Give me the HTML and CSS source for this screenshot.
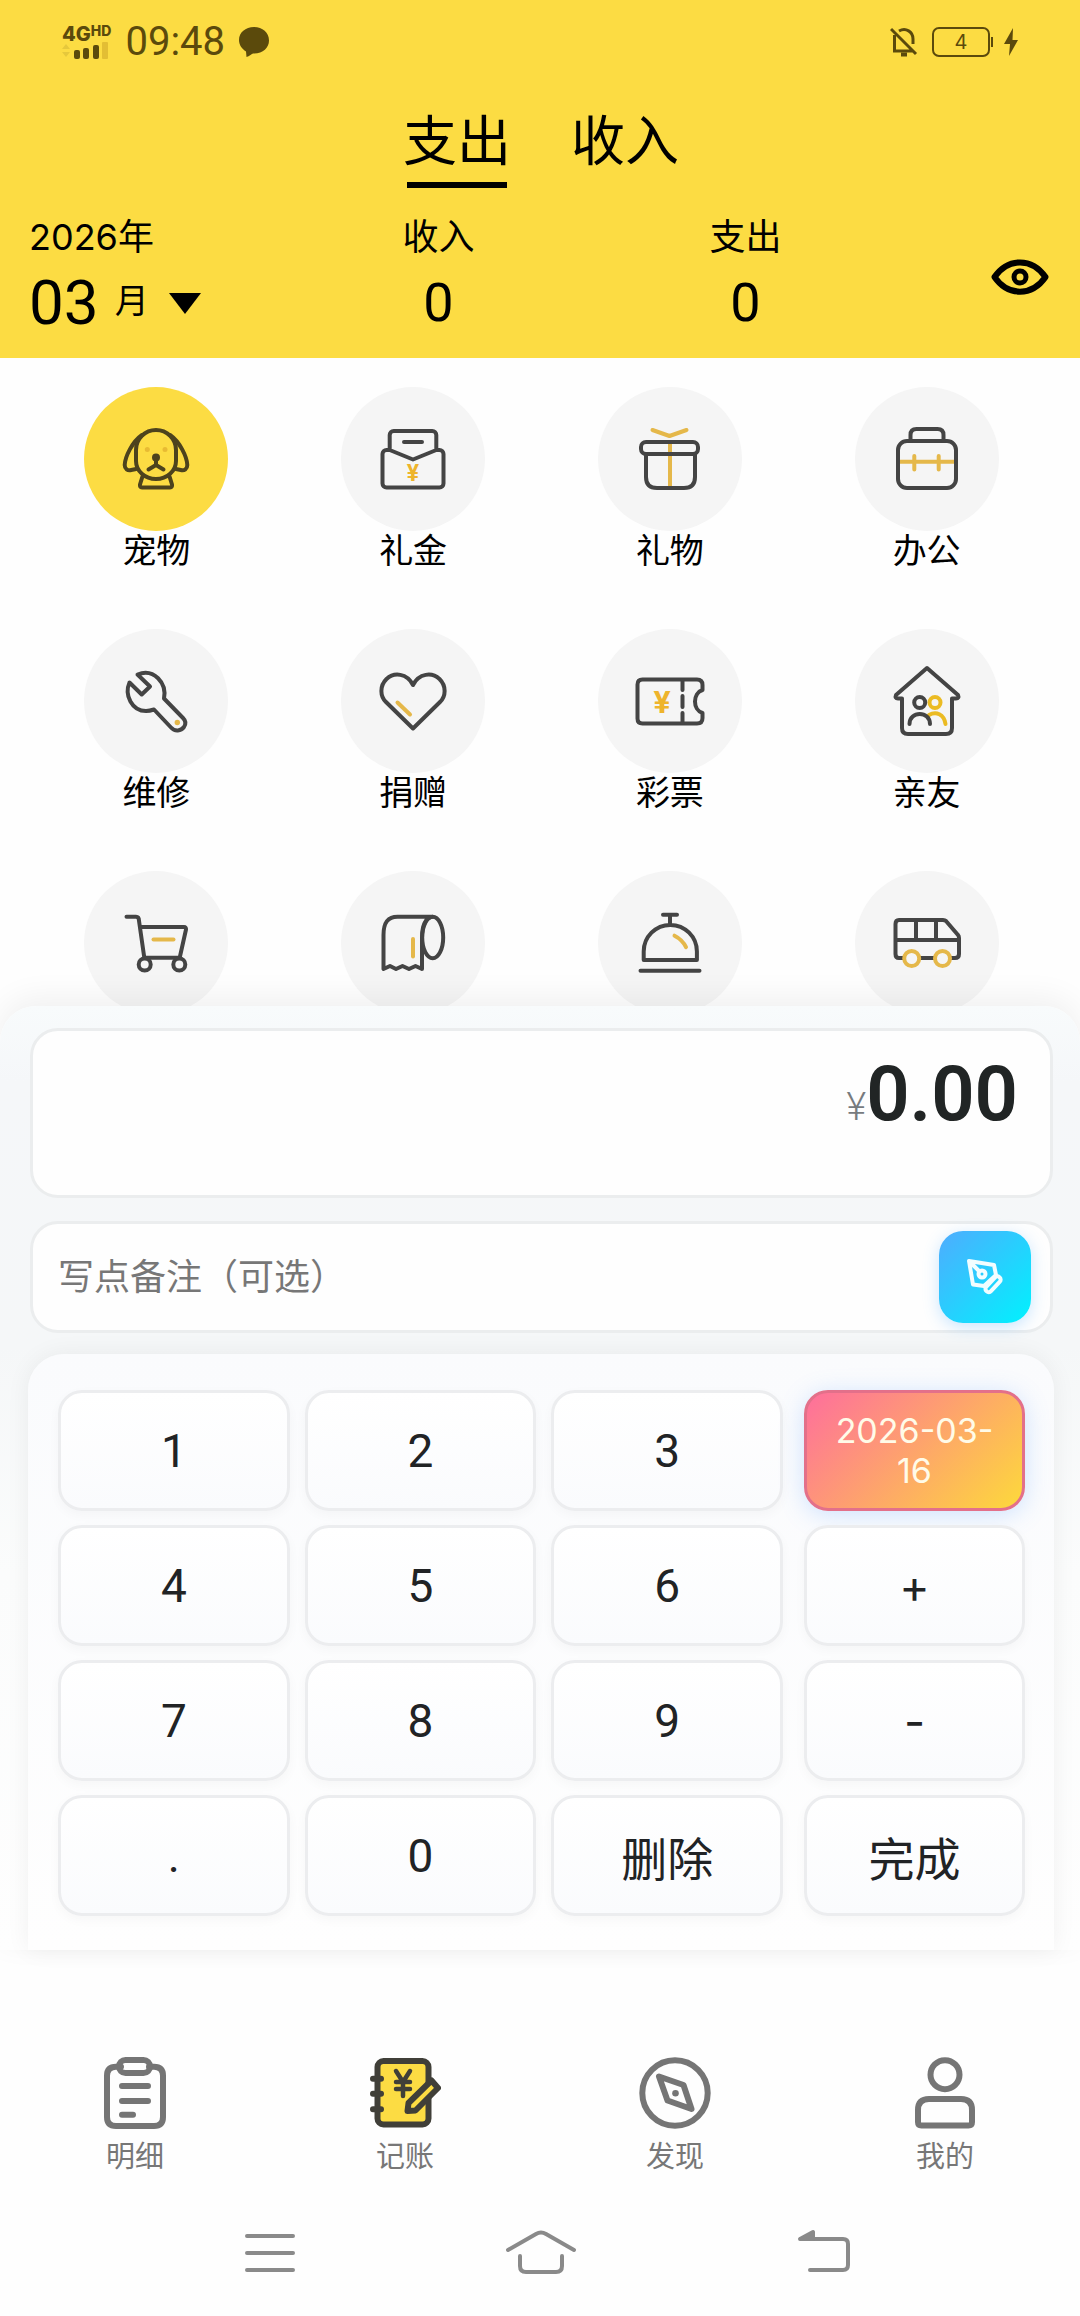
FILE: index.html
```html
<!DOCTYPE html>
<html lang="zh-CN">
<head>
  <meta charset="UTF-8">
  <meta name="viewport" content="width=device-width, initial-scale=1.0">
  <title>记账</title>
  <link rel="stylesheet" href="styles.css">
</head>
<body>
  <div class="app">
    <header class="header">
      <div class="status">
        <div class="status-side">
          <div class="signal">
            <span class="network">4G<sup>HD</sup></span>
            <svg width="46" height="17" viewBox="0 0 46 17">
              <path d="M0 7l4-5 4 5zM0 10l4 5 4-5z" fill="#e6c83c"/>
              <rect x="12" y="8" width="6" height="9" rx="2"/>
              <rect x="21" y="6" width="6" height="11" rx="2"/>
              <rect x="31" y="3" width="6" height="14" rx="2"/>
              <rect x="40" y="0" width="6" height="17" rx="1" fill="#e3be34"/>
            </svg>
          </div>
          <span class="time">09:48</span>
          <svg width="30" height="30" viewBox="0 0 30 30"><path d="M15 0C6.500 0 0 5.500 0 13c0 5 3 9 7 11.500L7.500 30c3-.5 4.500-3 6.500-3.500C23.500 27 30 21 30 13.500 30 5.500 23.500 0 15 0z"/></svg>
        </div>
        <div class="status-side status-right">
          <svg width="28" height="30" viewBox="0 0 28 30" fill="none" stroke="#5b4a0c" stroke-width="3">
            <path d="M1 2l25 25M4.500 8V24H23M9 4c7-4 14 1 14 8v5"/>
            <path d="M11 27.500h6" stroke-width="4"/>
          </svg>
          <span class="battery">4</span>
          <svg width="14" height="28" viewBox="0 0 14 28"><path d="M9 0L0 16h6l-1 12L14 12H8.500z"/></svg>
        </div>
      </div>

      <nav class="type-tabs">
        <button class="type-tab active">支出</button>
        <button class="type-tab">收入</button>
      </nav>

      <div class="summary">
        <div class="month">
          <span class="caption">2026年</span>
          <button class="month-pick"><span class="month-num">03</span><span class="month-unit">月</span><i class="caret"></i></button>
        </div>
        <div class="total">
          <span class="caption">收入</span>
          <span class="total-num">0</span>
        </div>
        <div class="total">
          <span class="caption">支出</span>
          <span class="total-num">0</span>
        </div>
        <button class="eye" aria-label="隐藏金额">
          <svg width="58" height="36" viewBox="0 0 58 36" fill="none" stroke="#000" stroke-width="6" stroke-linejoin="round">
            <path d="M3.500 18C17-1.500 41-1.500 54.500 18 41 37.500 17 37.500 3.500 18z"/>
            <circle cx="29" cy="18" r="6" stroke-width="5"/>
          </svg>
        </button>
      </div>
    </header>

    <main class="categories">
      <button class="cat active">
        <span class="cat-icon"><svg viewBox="0 0 72 72">
          <path d="M16 27a20 20 0 0 1 40 0v11a20 18 0 0 1-40 0z"/>
          <path d="M22 12C12 19 5 34 4.700 42c0 4 3 6 6.500 5l5-1M50 12c10 7 17 22 17.300 30 0 4-3 6-6.500 5l-5-1"/>
          <path d="M22.300 54L20 61.500q-.5 3 2 3h28q2.500 0 2-3L49.700 54M36 35v7l-7.500 4.500M36 42l7.500 4.500"/>
          <circle cx="36" cy="34.500" r="2"/>
          <g fill="#e8bb33" stroke="none"><circle cx="27.300" cy="26.500" r="2.500"/><circle cx="45" cy="26.500" r="2.500"/></g>
        </svg></span>
        宠物
      </button>
      <button class="cat">
        <span class="cat-icon"><svg viewBox="0 0 72 72">
          <path d="M12.700 27H9.500a4 4 0 0 0-4 4v29.500a4 4 0 0 0 4 4h53a4 4 0 0 0 4-4V31a4 4 0 0 0-4-4h-3.200L36 36.500 12.700 27V12a4 4 0 0 1 4-4h38.600a4 4 0 0 1 4 4v15M27 19h18"/>
          <text class="yen" x="36" y="58" font-size="23">¥</text>
        </svg></span>
        礼金
      </button>
      <button class="cat">
        <span class="cat-icon"><svg viewBox="0 0 72 72">
          <path class="accent" d="M18.500 7L35.500 13 52.500 7M36 19v45"/>
          <rect x="7" y="19" width="57" height="12" rx="5"/>
          <path d="M12 31v23q0 11 11 11h27q11 0 11-11V31"/>
        </svg></span>
        礼物
      </button>
      <button class="cat">
        <span class="cat-icon"><svg viewBox="0 0 72 72">
          <path class="accent" d="M9 38.700h54M23.300 33v13.500M47.700 33v13.500"/>
          <rect x="7" y="18" width="58" height="47" rx="9"/>
          <path d="M19.500 18v-6q0-6 6-6h21q6 0 6 6v6"/>
        </svg></span>
        办公
      </button>

      <button class="cat">
        <span class="cat-icon"><svg viewBox="0 0 72 72">
          <path d="M17.500 9.500L30 21.500 21.700 29.500 9.500 17.500C4 30 12 46 26 46c3 0 5-.5 8-1.500l17 18c4 4.500 10 3.500 13-.5 2-3 2-6-1-9L44 33.500C47 18 34 3 17.500 9.500z"/>
          <circle cx="57.300" cy="57.500" r="2.700" fill="#e5b84a" stroke="none"/>
        </svg></span>
        维修
      </button>
      <button class="cat">
        <span class="cat-icon"><svg viewBox="0 0 72 72">
          <path d="M36 20C30 8 17 7 9.500 14 2.500 21 3 31 9 37l27 26.500L63 37c6-6 6.500-16-.5-23C55 7 42 8 36 20z"/>
          <path class="accent" d="M20.500 37.500l12.500 12"/>
        </svg></span>
        捐赠
      </button>
      <button class="cat">
        <span class="cat-icon"><svg viewBox="0 0 72 72">
          <path d="M8.500 14.500H63q5.500 0 5.500 5.500v5c-10 3-10 20 0 23v5q0 5.500-5.500 5.500H8.500q-5 0-5-5v-34q0-5 5-5z"/>
          <path d="M48.500 15v10M48.500 31v11M48.500 48v10"/>
          <text class="yen" x="28" y="48" font-size="32">¥</text>
        </svg></span>
        彩票
      </button>
      <button class="cat">
        <span class="cat-icon"><svg viewBox="0 0 72 72">
          <path d="M36 3L5 30q-1.500 3.500 2 3.500h4V63q0 6 6 6h38q6 0 6-6V33.500h4q3.500 0 2-3.500z"/>
          <g stroke="#ebbb23"><circle cx="44" cy="37.500" r="5.500"/><path d="M38 50c7-4 15-1 16.500 9"/></g>
          <circle cx="28.700" cy="37.500" r="5.500"/><path d="M18.500 59c0-13.500 20.500-13.500 20.500 0"/>
        </svg></span>
        亲友
      </button>

      <button class="cat" aria-label="购物">
        <span class="cat-icon"><svg viewBox="0 0 72 72">
          <path d="M6.500 9.700H16q3 0 3 4l5.300 37h35.400L66 22.500q.3-2.500-2-2.500H20"/>
          <circle cx="24.700" cy="57.500" r="6"/><circle cx="59.300" cy="57.500" r="6"/>
          <path class="accent" d="M33.500 32.500h20"/>
        </svg></span>
      </button>
      <button class="cat" aria-label="日用">
        <span class="cat-icon"><svg viewBox="0 0 72 72">
          <path d="M6.500 62V28c0-12 4-18.300 14-18.300h35C48 10 45 20 45 31v31l-6.500-3-6.500 3-6.500-3-6.500 3-6-3z"/>
          <ellipse cx="55.700" cy="30.500" rx="10.500" ry="20.800"/>
          <path class="accent" d="M36 32v17.500"/>
        </svg></span>
      </button>
      <button class="cat" aria-label="餐饮">
        <span class="cat-icon"><svg viewBox="0 0 72 72">
          <path d="M29 7.700h14M36 8v9M9.700 53V44.500a26.600 26.600 0 0 1 53.200 0V53zM6.500 63.700h59"/>
          <path class="accent" d="M40.500 28.700q8 4 11.500 11.500"/>
        </svg></span>
      </button>
      <button class="cat" aria-label="交通">
        <span class="cat-icon"><svg viewBox="0 0 72 72">
          <path d="M8 13h44q2 0 3 1l12 14q1 1 1 3v16q0 4-4 4H8q-3.500 0-3.500-4V17q0-4 3.500-4zM5 33h62M25 14v19M45 14v19"/>
          <g stroke="#e5b84a" fill="#f5f5f5"><circle cx="20.700" cy="51.500" r="7.500"/><circle cx="51.500" cy="51.500" r="7.500"/></g>
        </svg></span>
      </button>
    </main>

    <section class="panel">
      <div class="card amount">
        <span class="currency">¥</span><span class="amount-num">0.00</span>
      </div>

      <div class="card note">
        <input class="note-input" type="text" placeholder="写点备注（可选）" aria-label="备注">
        <button class="note-btn" aria-label="编辑备注">
          <svg width="40" height="40" viewBox="0 0 40 40">
            <path d="M4 4l25 4 2 10-12 11-11-1.500zM5 5l9 9"/>
            <circle cx="17" cy="17" r="3.500"/>
            <rect x="18.500" y="24" width="19" height="6.500" rx="3" transform="rotate(-47 28 27.200)"/>
          </svg>
        </button>
      </div>

      <div class="keypad">
        <div class="keys keys-num">
          <button class="key">1</button>
          <button class="key">2</button>
          <button class="key">3</button>
          <button class="key">4</button>
          <button class="key">5</button>
          <button class="key">6</button>
          <button class="key">7</button>
          <button class="key">8</button>
          <button class="key">9</button>
          <button class="key">.</button>
          <button class="key">0</button>
          <button class="key">删除</button>
        </div>
        <div class="keys keys-op">
          <button class="key key-date">2026-03-16</button>
          <button class="key">+</button>
          <button class="key">-</button>
          <button class="key">完成</button>
        </div>
      </div>
    </section>

    <nav class="tabbar">
      <a class="tab" href="#">
        <svg viewBox="0 0 72 72">
          <path d="M22 9.700h-5q-9 0-9 9V60q0 9 9 9h38q9 0 9-9V18.700q0-9-9-9h-5"/>
          <rect x="20" y="3" width="31" height="13" rx="6.500"/>
          <path d="M23 29h26M23 44h26M23 57.700h11"/>
        </svg>
        明细
      </a>
      <a class="tab" href="#">
        <svg viewBox="0 0 72 72" class="book">
          <rect x="8.500" y="4" width="51" height="63.500" rx="6"/>
          <path d="M4 21.700h8M4 36.700h8M4 52.300h8"/>
          <path d="M27 14l7 11 7-11M34 25v14M27 25h14M27 32h14" stroke-width="4.500"/>
          <path d="M62.500 23.500L39.500 46 38.500 54l8-.5L69 31z"/>
        </svg>
        记账
      </a>
      <a class="tab" href="#">
        <svg viewBox="0 0 72 72">
          <circle cx="36" cy="36" r="32.700"/>
          <path d="M20 19.500L44.500 28 52.500 52 28.500 43.500z"/>
          <circle cx="36.500" cy="36.300" r="3.300" fill="#757575" stroke="none"/>
        </svg>
        发现
      </a>
      <a class="tab" href="#">
        <svg viewBox="0 0 72 72">
          <circle cx="36" cy="17.700" r="14.500"/>
          <path d="M20 42h32q11 0 11 11v12q0 3.500-3.500 3.500h-47Q9 68.500 9 65V53q0-11 11-11z"/>
        </svg>
        我的
      </a>
    </nav>

    <div class="sysnav">
      <button aria-label="最近任务"><svg width="76" height="50" viewBox="0 0 76 50"><path d="M15 8h46M15 25h46M15 42h46"/></svg></button>
      <button aria-label="主屏幕"><svg width="76" height="50" viewBox="0 0 76 50"><path d="M6 22L34 6q5-3 10 0l28 16M18 28v10q0 6 6 6h30q6 0 6-6V28"/></svg></button>
      <button aria-label="返回"><svg width="80" height="50" viewBox="0 0 80 50"><path d="M31 11h42q5 0 5 5v21q0 5-5 5H40"/><path d="M30 11l13-7v7z" fill="#8a8a8a"/></svg></button>
    </div>
  </div>
</body>
</html>
```

FILE: styles.css
```css
* {
  box-sizing: border-box;
}
body {
  margin: 0;
  background: #fefefe;
  color: #000;
  font-family: Inter, "Noto Sans CJK SC", sans-serif;
}
button {
  margin: 0;
  padding: 0;
  border: none;
  background: none;
  color: inherit;
  font-family: inherit;
  cursor: pointer;
}
svg {
  display: block;
}
.app {
  display: flex;
  flex-direction: column;
  min-height: 100vh;
}

/* header */
.header {
  background: #fcdc43;
  padding-bottom: 19px;
}
.status {
  display: flex;
  justify-content: space-between;
  align-items: center;
  height: 84px;
  padding: 0 62px;
  color: #5b4a0c;
  fill: #5b4a0c;
}
.status-side {
  display: flex;
  align-items: center;
  gap: 14px;
}
.signal {
  display: flex;
  flex-direction: column;
}
.network {
  font-size: 20px;
  line-height: 16px;
  font-weight: 800;
}
.network sup {
  font-size: 14px;
  line-height: 0;
  vertical-align: 5px;
}
.time {
  font-family: Roboto, sans-serif;
  font-size: 40px;
  line-height: 40px;
}
.battery {
  position: relative;
  width: 58px;
  height: 30px;
  border: 2px solid #5b4a0c;
  border-radius: 7px;
  font-size: 20px;
  line-height: 27px;
  text-align: center;
}
.battery::after {
  content: "";
  position: absolute;
  top: 8px;
  right: -5px;
  width: 2px;
  height: 10px;
  background: #5b4a0c;
}
.type-tabs {
  display: flex;
  justify-content: center;
  gap: 60px;
  padding: 21px 0 0 2px;
}
.type-tab {
  height: 83px;
  font-size: 54px;
  line-height: 74px;
}
.type-tab::after {
  content: "";
  display: block;
  width: 100px;
  height: 6px;
  margin: 3px auto 0;
}
.type-tab.active::after {
  background: #000;
}
.summary {
  display: grid;
  grid-template-columns: 256fr 307fr 307fr 150fr;
  padding: 26px 31px 0 29px;
}
.month,
.total {
  display: flex;
  flex-direction: column;
  gap: 7px;
}
.total {
  align-items: center;
}
.caption {
  font-size: 36px;
  line-height: 46px;
}
.month-pick {
  display: flex;
  align-items: center;
  height: 72px;
}
.month-num,
.total-num {
  font-family: Roboto, sans-serif;
  font-size: 62px;
  line-height: 72px;
}
.total-num {
  font-size: 54px;
}
.month-unit {
  margin: 0 20px 0 16px;
  font-size: 34px;
  line-height: 40px;
  padding-bottom: 4px;
}
.caret {
  border: 16px solid transparent;
  border-top: 21px solid #000;
  border-bottom: 0;
}
.eye {
  justify-self: end;
  align-self: center;
}

/* category grid */
.categories {
  flex: 1 1 0;
  display: grid;
  grid-template-columns: repeat(4, 1fr);
  grid-auto-rows: 242px;
  padding: 29px 25px 0 28px;
  overflow: hidden;
}
.cat {
  display: flex;
  flex-direction: column;
  align-items: center;
  font-size: 34px;
  line-height: 40px;
}
.cat-icon {
  display: flex;
  justify-content: center;
  align-items: center;
  width: 144px;
  height: 144px;
  border-radius: 50%;
  background: #f5f5f5;
}
.cat.active .cat-icon {
  background: #fcdc43;
}
.cat-icon svg {
  width: 72px;
  height: 72px;
  fill: none;
  stroke: #444;
  stroke-width: 4;
  stroke-linecap: round;
  stroke-linejoin: round;
}
.cat.active svg {
  stroke: #4d431d;
}
.cat-icon .accent {
  stroke: #e5b84a;
}
.cat-icon .yen {
  fill: #eeb42c;
  stroke: none;
  font-family: Roboto, sans-serif;
  font-weight: 700;
  text-anchor: middle;
}

/* entry panel */
.panel {
  position: relative;
  display: flex;
  flex-direction: column;
  padding: 22px 26px 0 28px;
  border-radius: 36px 36px 0 0;
  background: linear-gradient(#f8fbfc 0, #f5f7f9 8%, #f5f7f8 36%, #fbfcfc 60%, #fefefe 100%);
  box-shadow: 0 -8px 32px rgba(0, 0, 0, 0.06);
}
.card {
  display: flex;
  margin: 0 1px 0 2px;
  border: 3px solid #ebedee;
  border-radius: 28px;
  background: #fefefe;
}
.amount {
  justify-content: flex-end;
  align-items: baseline;
  height: 170px;
  padding: 17px 32px 0 0;
  font-family: Roboto, sans-serif;
}
.currency {
  color: #777b7e;
  font-size: 38px;
  font-weight: 300;
}
.amount-num {
  color: #212525;
  font-size: 76px;
  line-height: 92px;
  font-weight: 600;
}
.note {
  align-items: center;
  height: 112px;
  margin-top: 23px;
  padding: 0 19px 0 25px;
}
.note-input {
  flex: 1;
  min-width: 0;
  border: none;
  outline: none;
  padding: 0;
  background: none;
  color: #212525;
  font-family: inherit;
  font-size: 36px;
}
.note-input::placeholder {
  color: #777;
}
.note-btn {
  display: flex;
  justify-content: center;
  align-items: center;
  width: 92px;
  height: 92px;
  border-radius: 24px;
  background: linear-gradient(135deg, #4facfe, #00f2fe);
  box-shadow: 0 4px 16px rgba(79, 172, 254, 0.3);
}
.note-btn svg {
  fill: none;
  stroke: #f2fdff;
  stroke-width: 4;
  stroke-linecap: round;
  stroke-linejoin: round;
}
.keypad {
  display: flex;
  gap: 21px;
  margin-top: 21px;
  padding: 36px 29px 34px 30px;
  border-radius: 36px 36px 0 0;
  background: linear-gradient(#fafbfd, #fefefe);
  box-shadow: 0 0 24px rgba(0, 0, 0, 0.06);
}
.keys {
  display: grid;
  grid-auto-rows: 121px;
  gap: 14px 15px;
}
.keys-num {
  flex: 725;
  grid-template-columns: repeat(3, 1fr);
}
.keys-op {
  flex: 221;
}
.key {
  border: 3px solid #ecedef;
  border-radius: 24px;
  background: linear-gradient(#fff, #fafbfd);
  box-shadow: 0 4px 12px rgba(0, 0, 0, 0.03);
  color: #212325;
  font-family: Roboto, "Noto Sans CJK SC", sans-serif;
  font-size: 46px;
}
.keys-op .key {
  font-family: Inter, "Noto Sans CJK SC", sans-serif;
}
.keys-op .key-date {
  padding: 0 20px;
  border-color: #e3708a;
  background: linear-gradient(135deg, #fe6f9c, #fdd93b);
  box-shadow: 0 4px 24px rgba(79, 150, 254, 0.25);
  color: #fffbe8;
  font-size: 34px;
  line-height: 40px;
}

/* bottom tabs */
.tabbar {
  display: grid;
  grid-template-columns: repeat(4, 1fr);
  padding: 107px 0 12px;
}
.tab {
  display: flex;
  flex-direction: column;
  align-items: center;
  gap: 7px;
  color: #777;
  font-size: 29px;
  line-height: 42px;
  text-decoration: none;
}
.tab svg {
  width: 72px;
  height: 72px;
  fill: none;
  stroke: #757575;
  stroke-width: 6;
  stroke-linecap: round;
  stroke-linejoin: round;
}
.tab .book {
  fill: #fcdc43;
  stroke: #403f38;
}
.sysnav {
  display: grid;
  grid-template-columns: repeat(3, 1fr);
  justify-items: center;
  align-items: center;
  height: 126px;
  padding: 0 12.5%;
}
.sysnav svg {
  fill: none;
  stroke: #8a8a8a;
  stroke-width: 4;
  stroke-linecap: round;
  stroke-linejoin: round;
}
```
